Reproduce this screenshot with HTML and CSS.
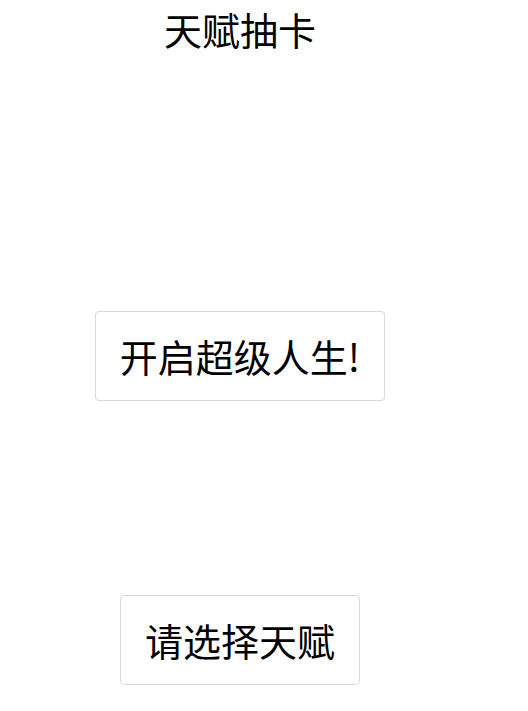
FILE: index.html
```html
<!DOCTYPE html>
<html lang="zh-CN">
<head>
<meta charset="utf-8">
<title>天赋抽卡</title>
<link rel="stylesheet" href="styles.css">
</head>
<body>
<main class="app">
  <h1 class="title">天赋抽卡</h1>
  <button class="btn btn-start">开启超级人生!</button>
  <button class="btn btn-choose">请选择天赋</button>
</main>
</body>
</html>
```
FILE: styles.css
```css
html, body {
  margin: 0;
  padding: 0;
  background: #fff;
}
body {
  font-family: "Noto Sans CJK SC", "Noto Sans", sans-serif;
  color: #000;
}
.app {
  width: 480px;
  display: flex;
  flex-direction: column;
  align-items: center;
}
.title {
  margin: 0;
  font-size: 38px;
  font-weight: normal;
  line-height: 58px;
}
.btn {
  font-family: inherit;
  font-size: 38px;
  color: #000;
  background: #fff;
  border: 1px solid #d9d9d9;
  border-radius: 4px;
  padding: 15px 24px;
  line-height: 58px;
}
.btn-start {
  margin-top: 253px;
}
.btn-choose {
  margin-top: 194px;
}
```
